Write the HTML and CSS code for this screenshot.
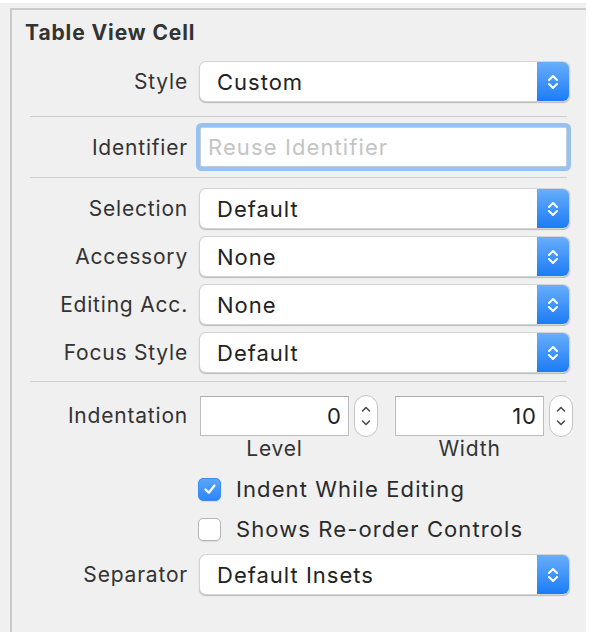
FILE: index.html
```html
<!DOCTYPE html>
<html>
<head>
<meta charset="utf-8">
<link rel="stylesheet" href="styles.css">
</head>
<body>
<div class="frame">
  <div class="panel">
    <div class="title">Table View Cell</div>

    <div class="row row-style">
      <div class="label">Style</div>
      <div class="popup"><span class="value">Custom</span><span class="arrows"><svg width="14" height="20" viewBox="0 0 14 20"><path d="M3 8 L7 4 L11 8 M3 12 L7 16 L11 12" fill="none" stroke="#fff" stroke-width="2" stroke-linecap="round" stroke-linejoin="round"/></svg></span></div>
    </div>

    <div class="sep"></div>

    <div class="row row-ident">
      <div class="label">Identifier</div>
      <div class="textfield"><span class="placeholder">Reuse Identifier</span></div>
    </div>

    <div class="sep sep-b"></div>

    <div class="popups">
      <div class="row">
        <div class="label">Selection</div>
        <div class="popup"><span class="value">Default</span><span class="arrows"><svg width="14" height="20" viewBox="0 0 14 20"><path d="M3 8 L7 4 L11 8 M3 12 L7 16 L11 12" fill="none" stroke="#fff" stroke-width="2" stroke-linecap="round" stroke-linejoin="round"/></svg></span></div>
      </div>
      <div class="row">
        <div class="label">Accessory</div>
        <div class="popup"><span class="value">None</span><span class="arrows"><svg width="14" height="20" viewBox="0 0 14 20"><path d="M3 8 L7 4 L11 8 M3 12 L7 16 L11 12" fill="none" stroke="#fff" stroke-width="2" stroke-linecap="round" stroke-linejoin="round"/></svg></span></div>
      </div>
      <div class="row">
        <div class="label">Editing Acc.</div>
        <div class="popup"><span class="value">None</span><span class="arrows"><svg width="14" height="20" viewBox="0 0 14 20"><path d="M3 8 L7 4 L11 8 M3 12 L7 16 L11 12" fill="none" stroke="#fff" stroke-width="2" stroke-linecap="round" stroke-linejoin="round"/></svg></span></div>
      </div>
      <div class="row">
        <div class="label">Focus Style</div>
        <div class="popup"><span class="value">Default</span><span class="arrows"><svg width="14" height="20" viewBox="0 0 14 20"><path d="M3 8 L7 4 L11 8 M3 12 L7 16 L11 12" fill="none" stroke="#fff" stroke-width="2" stroke-linecap="round" stroke-linejoin="round"/></svg></span></div>
      </div>
    </div>

    <div class="sep sep-c"></div>

    <div class="row row-indent">
      <div class="label">Indentation</div>
      <div class="numbers">
        <div class="numgroup">
          <div class="numrow">
            <div class="numfield">0</div>
            <div class="stepper"><svg width="12" height="30" viewBox="0 0 12 30"><path d="M2.5 10 L6 6.5 L9.5 10 M2.5 20 L6 23.5 L9.5 20" fill="none" stroke="#4a4a4a" stroke-width="1.6" stroke-linecap="round" stroke-linejoin="round"/></svg></div>
          </div>
          <div class="sublabel">Level</div>
        </div>
        <div class="numgroup">
          <div class="numrow">
            <div class="numfield">10</div>
            <div class="stepper"><svg width="12" height="30" viewBox="0 0 12 30"><path d="M2.5 10 L6 6.5 L9.5 10 M2.5 20 L6 23.5 L9.5 20" fill="none" stroke="#4a4a4a" stroke-width="1.6" stroke-linecap="round" stroke-linejoin="round"/></svg></div>
          </div>
          <div class="sublabel">Width</div>
        </div>
      </div>
    </div>

    <div class="checks">
      <div class="check"><span class="box on"><svg width="16" height="16" viewBox="0 0 16 16"><path d="M3.5 8.5 L6.8 11.8 L12.5 4.5" fill="none" stroke="#fff" stroke-width="2.2" stroke-linecap="round" stroke-linejoin="round"/></svg></span><span class="ctext">Indent While Editing</span></div>
      <div class="check"><span class="box"></span><span class="ctext">Shows Re-order Controls</span></div>
    </div>

    <div class="row row-separator">
      <div class="label">Separator</div>
      <div class="popup"><span class="value">Default Insets</span><span class="arrows"><svg width="14" height="20" viewBox="0 0 14 20"><path d="M3 8 L7 4 L11 8 M3 12 L7 16 L11 12" fill="none" stroke="#fff" stroke-width="2" stroke-linecap="round" stroke-linejoin="round"/></svg></span></div>
    </div>
  </div>
</div>
</body>
</html>
```
FILE: styles.css
```css
html, body {
  margin: 0;
  padding: 0;
  background: #ffffff;
}

body {
  font-family: "Inter", "Open Sans", "Noto Sans", sans-serif;
  color: #2a2a2a;
}

.frame {
  margin-top: 3px;
  width: 586px;
  height: 629px;
  background: #f0f0f0;
  padding-top: 5px;
  padding-left: 10px;
  box-sizing: border-box;
}

.panel {
  height: 624px;
  border-left: 2px solid #cacaca;
  border-top: 2px solid #cacaca;
  display: flex;
  flex-direction: column;
}

.title {
  margin-top: 10px;
  margin-left: 13px;
  font-size: 21px;
  font-weight: 700;
  letter-spacing: 0.9px;
  line-height: 26px;
  color: #333;
}

.row {
  display: flex;
  align-items: center;
  height: 39px;
}

.row-style {
  margin-top: 16px;
}

.label {
  width: 176px;
  text-align: right;
  font-size: 21px;
  letter-spacing: 0.8px;
  color: #333;
  margin-right: 12px;
  flex: none;
}

.popup {
  width: 369px;
  height: 39px;
  box-sizing: border-box;
  background: #fff;
  border-radius: 6px;
  box-shadow: 0 0 0 1px #d4d4d4, 0 1px 1px 0.5px #b8b8b8;
  display: flex;
  align-items: center;
  overflow: hidden;
}

.popup .value {
  flex: 1;
  padding-left: 17px;
  font-size: 22px;
  color: #222;
  letter-spacing: 1px;
}

.arrows {
  width: 32px;
  height: 100%;
  background: linear-gradient(#68aefb, #1c7cf6);
  display: flex;
  align-items: center;
  justify-content: center;
}

.sep {
  height: 1px;
  background: #cfcfcf;
  margin: 15px 19px 0 18px;
}

.row-ident {
  margin-top: 10px;
  height: 40px;
}

.textfield {
  width: 367px;
  height: 40px;
  box-sizing: border-box;
  background: #fff;
  border: 1px solid #bfcfe0;
  box-shadow: 0 0 0 4px #97c1f1;
  border-radius: 2px;
  display: flex;
  align-items: center;
}

.placeholder {
  padding-left: 7px;
  font-size: 22px;
  letter-spacing: 1.1px;
  color: #c4c4c4;
}

.sep-b {
  margin-top: 10px;
}

.popups {
  margin-top: 11px;
  display: flex;
  flex-direction: column;
  gap: 9px;
}

.sep-c {
  margin-top: 9px;
}

.row-indent {
  margin-top: 13px;
  align-items: flex-start;
  height: auto;
}

.row-indent .label {
  line-height: 42px;
}

.numbers {
  display: flex;
  gap: 17px;
}

.numgroup {
  display: flex;
  flex-direction: column;
  align-items: flex-start;
}

.numrow {
  display: flex;
  align-items: center;
  gap: 5px;
}

.numfield {
  width: 149px;
  height: 40px;
  box-sizing: border-box;
  background: #fff;
  border: 1px solid #bcbcbc;
  border-top-color: #a9a9a9;
  text-align: right;
  padding-right: 6px;
  font-size: 22px;
  letter-spacing: 1px;
  line-height: 38px;
  color: #222;
}

.stepper {
  width: 24px;
  height: 42px;
  box-sizing: border-box;
  background: #fff;
  border: 1px solid #c4c4c4;
  border-radius: 12px;
  display: flex;
  align-items: center;
  justify-content: center;
}

.sublabel {
  width: 149px;
  text-align: center;
  font-size: 21px;
  letter-spacing: 0.8px;
  line-height: 24px;
  color: #333;
  margin-top: 0;
}

.checks {
  margin-top: 15px;
  margin-left: 186px;
  display: flex;
  flex-direction: column;
  gap: 14px;
}

.check {
  display: flex;
  align-items: center;
  height: 26px;
}

.box {
  width: 23px;
  height: 23px;
  box-sizing: border-box;
  border-radius: 5px;
  background: #fff;
  border: 1px solid #b5b5b5;
  box-shadow: 0 1px 1px rgba(0,0,0,0.08);
  display: flex;
  align-items: center;
  justify-content: center;
  margin-right: 15px;
}

.box.on {
  background: linear-gradient(#5aa7fb, #2b86f7);
  border-color: #3a8cf0;
}

.ctext {
  font-size: 22px;
  color: #2a2a2a;
  letter-spacing: 1.1px;
}

.row-separator {
  margin-top: 13px;
}
```
